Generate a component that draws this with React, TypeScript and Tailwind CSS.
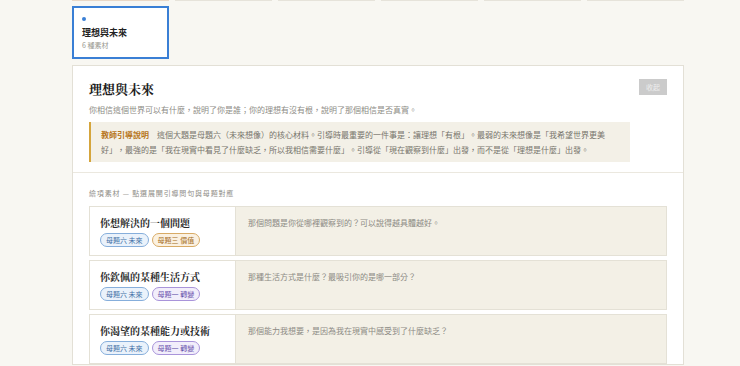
import React from "react";

const sans = "font-['Noto_Sans_CJK_TC','Noto_Sans','Liberation_Sans',sans-serif]";
const serif = "font-['Noto_Serif_CJK_TC','Liberation_Serif','Noto_Sans_CJK_TC',serif]";

type Tag = { label: string; tone: "blue" | "orange" | "purple" };

const toneClass: Record<Tag["tone"], string> = {
  blue: "border-[#86aedb] bg-[#eaf2fb] text-[#3f6fa6]",
  orange: "border-[#d8ab66] bg-[#fbf1e1] text-[#a46c22]",
  purple: "border-[#a994da] bg-[#f2eefb] text-[#6a52ad]",
};

const rows: { title: string; tags: Tag[]; prompt: string }[] = [
  {
    title: "你想解決的一個問題",
    tags: [
      { label: "母題六 未來", tone: "blue" },
      { label: "母題三 價值", tone: "orange" },
    ],
    prompt: "那個問題是你從哪裡觀察到的？可以說得越具體越好。",
  },
  {
    title: "你欽佩的某種生活方式",
    tags: [
      { label: "母題六 未來", tone: "blue" },
      { label: "母題一 轉變", tone: "purple" },
    ],
    prompt: "那種生活方式是什麼？最吸引你的是哪一部分？",
  },
  {
    title: "你渴望的某種能力或技術",
    tags: [
      { label: "母題六 未來", tone: "blue" },
      { label: "母題一 轉變", tone: "purple" },
    ],
    prompt: "那個能力我想要，是因為我在現實中感受到了什麼缺乏？",
  },
];

function MaterialRow({ title, tags, prompt }: (typeof rows)[number]) {
  return (
    <div className="flex h-[50px] border border-[#e4e1d6]">
      <div className="w-[145px] shrink-0 bg-white px-[10px] pt-[9px]">
        <div className={`${serif} text-[10px] font-bold leading-[14px] text-[#2a2a2a]`}>{title}</div>
        <div className="mt-[3px] flex gap-[3px]">
          {tags.map((t) => (
            <span
              key={t.label}
              className={`flex h-[14px] items-center rounded-full border px-[5px] text-[7px] leading-none ${toneClass[t.tone]}`}
            >
              {t.label}
            </span>
          ))}
        </div>
      </div>
      <div className="flex-1 border-l border-[#e4e1d6] bg-[#f3f0e6] px-[12px] pt-[10px] text-[8px] leading-[12px] text-[#8c8a84]">
        {prompt}
      </div>
    </div>
  );
}

export default function App() {
  return (
    <div className={`${sans} h-[366px] overflow-hidden bg-[#f8f7f2]`}>
      <div className="ml-[72px] w-[612px]">
        <div className="-mt-[52px] grid grid-cols-6 gap-x-[6px] gap-y-[5px]">
          {[0, 1, 2, 3, 4, 5].map((i) => (
            <div
              key={i}
              className={`h-[53px] border bg-white ${i === 0 ? "border-[#ead8c6]" : "border-[#e6e3da]"}`}
            />
          ))}
          <div className="h-[53px] border-2 border-[#3a7fd5] bg-white px-[8px] pt-[9px]">
            <div className="h-[4px] w-[4px] rounded-full bg-[#3a7fd5]" />
            <div className="mt-[6px] text-[9px] font-bold leading-[12px] text-[#222]">理想與未來</div>
            <div className="mt-[1px] text-[7px] leading-[10px] text-[#9a9890]">6 種素材</div>
          </div>
        </div>

        <div className="mt-[6px] border border-[#e3e0d6] bg-white">
          <div className="border-b border-[#ebe8df] px-[16px] pb-[10px] pt-[15px]">
            <div className="flex items-start justify-between">
              <div className={`${serif} text-[13px] font-bold leading-[16px] text-[#1f1f1f]`}>理想與未來</div>
              <button className="-mt-[2px] h-[16px] w-[28px] bg-[#cbcbcb] text-[7px] leading-none text-[#eeeeee]">
                收起
              </button>
            </div>
            <p className="mt-[7px] text-[8px] leading-[12px] text-[#8d8b85]">
              你相信這個世界可以有什麼，說明了你是誰；你的理想有沒有根，說明了那個相信是否真實。
            </p>
            <div className="mt-[6px] mr-[37px] border-l-2 border-[#d5a53c] bg-[#f3f0e7] py-[5px] pl-[10px] pr-[8px] text-[8px] leading-[15px] text-[#77746c]">
              <span className="mr-[8px] font-bold text-[#b7761c]">教師引導說明</span>
              這個大題是母題六（未來想像）的核心材料。引導時最重要的一件事是：讓理想「有根」。最弱的未來想像是「我希望世界更美好」，最強的是「我在現實中看見了什麼缺乏，所以我相信需要什麼」。引導從「現在觀察到什麼」出發，而不是從「理想是什麼」出發。
            </div>
          </div>

          <div className="px-[16px] pt-[14px]">
            <div className="text-[7px] leading-[12px] tracking-[0.12em] text-[#8f8d87]">
              繪項素材 — 點選展開引導問句與母題對應
            </div>
            <div className="mt-[7px] flex flex-col gap-[4px]">
              {rows.map((r) => (
                <MaterialRow key={r.title} {...r} />
              ))}
            </div>
          </div>
        </div>
      </div>
    </div>
  );
}
